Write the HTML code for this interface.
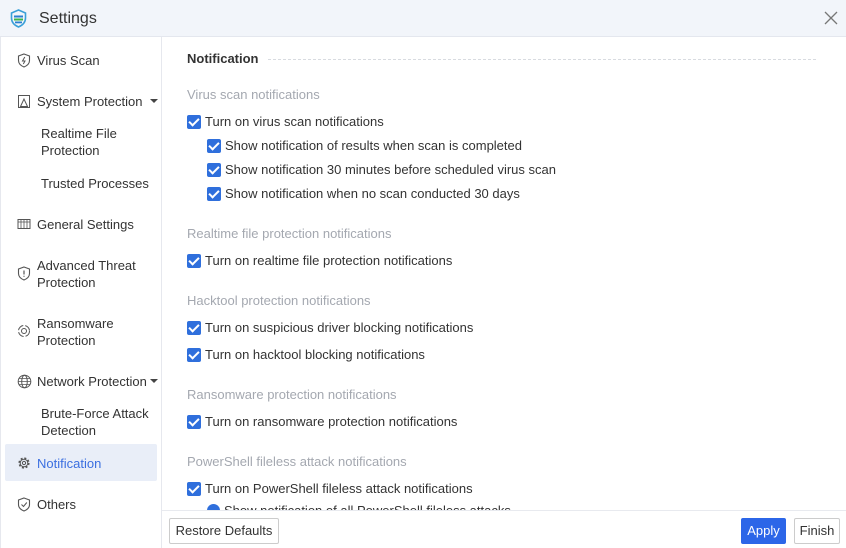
<!DOCTYPE html>
<html><head><style>
*{margin:0;padding:0;box-sizing:border-box}
body{width:846px;height:548px;overflow:hidden;background:#fff;font-family:"Liberation Sans","Noto Sans CJK SC",sans-serif;color:#333;font-size:13px;position:relative}
.title{position:absolute;left:0;top:0;width:846px;height:37px;background:#f2f5fa;border-bottom:1px solid #e4e7ee}
.title span{position:absolute;left:39px;top:10px;font-size:16px;color:#333}
.close{position:absolute;right:8px;top:11px}
.side{position:absolute;left:0;top:37px;width:162px;height:511px;border-right:1px solid #e6e8ee;border-left:1px solid #e6e8ee}
.it{position:absolute;left:37px;font-size:13px;color:#333;line-height:17px}
.sub{position:absolute;left:41px;font-size:13px;color:#333;line-height:17px}
.ic{position:absolute;left:17px}
.sel{position:absolute;left:5px;top:444px;width:152px;height:37px;background:#e9eef8;border-radius:2px}
.arr{position:absolute;width:0;height:0;border-left:4px solid transparent;border-right:4px solid transparent;border-top:4px solid #444}
.c{position:absolute;font-size:13px;color:#333;line-height:16px;white-space:nowrap}
.c i{display:inline-block;width:14px;height:14px;background:#2f6fdc;border-radius:2px;vertical-align:-3px;margin-right:4px;position:relative}
.c i:after{content:"";position:absolute;left:4px;top:1px;width:4px;height:8px;border:solid #fff;border-width:0 2px 2px 0;transform:rotate(45deg)}
.h{position:absolute;left:187px;color:#a4a8b0;font-size:13px}
.bottom{position:absolute;left:162px;top:510px;width:684px;height:38px;background:#fff;border-top:1px solid #e8eaef}
.btn{position:absolute;height:26px;border:1px solid #ccc;border-radius:2px;font-size:13px;line-height:24px;text-align:center;color:#333;background:#fff}
</style></head><body>
<div class="title">
<svg style="position:absolute;left:10px;top:9px" width="17" height="19" viewBox="0 0 17 19"><path d="M8.5 1 L15.5 4 V9 C15.5 13.5 12 16.5 8.5 18 C5 16.5 1.5 13.5 1.5 9 V4Z" fill="none" stroke="#3aa0d8" stroke-width="1.6"/><rect x="4" y="6.5" width="9" height="2" fill="#2a7fd0"/><rect x="4" y="9.5" width="9" height="2" fill="#3cb44a"/><rect x="5" y="12.5" width="7" height="1.8" fill="#2a7fd0"/></svg>
<span>Settings</span>
<svg class="close" width="14" height="14" viewBox="0 0 14 14"><path d="M1 1L13 13M13 1L1 13" stroke="#777" stroke-width="1.3"/></svg>
</div>
<div class="side"></div>
<div class="sel"></div>
<svg class="ic" style="top:53px" width="14" height="15" viewBox="0 0 14 15"><path d="M7 1L12.5 3V7.5C12.5 10.5 10 12.8 7 14C4 12.8 1.5 10.5 1.5 7.5V3Z" fill="none" stroke="#555" stroke-width="1.1"/><path d="M7.8 4L5.5 8H8L6.3 11" fill="none" stroke="#555" stroke-width="1"/></svg>
<div class="it" style="top:52px">Virus Scan</div>
<svg class="ic" style="top:94px" width="14" height="15" viewBox="0 0 14 15"><rect x="1.5" y="1.5" width="11" height="12" fill="none" stroke="#555"/><path d="M7 5L3.5 12.5H10.5Z" fill="none" stroke="#555"/></svg>
<div class="it" style="top:93px">System Protection</div>
<div class="arr" style="left:150px;top:99px"></div>
<div class="sub" style="top:125px">Realtime File<br>Protection</div>
<div class="sub" style="top:175px">Trusted Processes</div>
<svg class="ic" style="top:218px" width="14" height="12" viewBox="0 0 14 12"><rect x="1" y="1.5" width="12" height="9" fill="none" stroke="#555"/><path d="M1 4H13M4 1.5V10.5M7 1.5V10.5M10 1.5V10.5" stroke="#555" stroke-width=".8"/></svg>
<div class="it" style="top:216px">General Settings</div>
<svg class="ic" style="top:266px" width="14" height="15" viewBox="0 0 14 15"><path d="M7 1L12.5 3V7.5C12.5 10.5 10 12.8 7 14C4 12.8 1.5 10.5 1.5 7.5V3Z" fill="none" stroke="#555" stroke-width="1.1"/><path d="M7 4.5V8.5M7 9.8V10.8" stroke="#555" stroke-width="1.2"/></svg>
<div class="it" style="top:257px">Advanced Threat<br>Protection</div>
<svg class="ic" style="top:324px" width="14" height="14" viewBox="0 0 14 14"><circle cx="7" cy="7" r="5.5" fill="none" stroke="#555" stroke-dasharray="7 2"/><circle cx="7" cy="7" r="2.5" fill="none" stroke="#555"/></svg>
<div class="it" style="top:315px">Ransomware<br>Protection</div>
<svg class="ic" style="top:374px" width="15" height="15" viewBox="0 0 15 15"><circle cx="7.5" cy="7.5" r="6.3" fill="none" stroke="#555"/><ellipse cx="7.5" cy="7.5" rx="2.8" ry="6.3" fill="none" stroke="#555"/><path d="M1.2 7.5H13.8M2 4.5H13M2 10.5H13" stroke="#555" stroke-width=".8"/></svg>
<div class="it" style="top:373px">Network Protection</div>
<div class="arr" style="left:150px;top:379px"></div>
<div class="sub" style="top:405px">Brute-Force Attack<br>Detection</div>
<svg class="ic" style="top:456px" width="14" height="14" viewBox="0 0 14 14"><circle cx="7" cy="7" r="4.8" fill="none" stroke="#555" stroke-width="1.6" stroke-dasharray="2 1.8"/><circle cx="7" cy="7" r="3.8" fill="none" stroke="#555"/><circle cx="7" cy="7" r="1.6" fill="none" stroke="#555"/></svg>
<div class="it" style="top:455px;color:#3b6fe0">Notification</div>
<svg class="ic" style="top:497px" width="14" height="15" viewBox="0 0 14 15"><path d="M7 1L12.5 3V7.5C12.5 10.5 10 12.8 7 14C4 12.8 1.5 10.5 1.5 7.5V3Z" fill="none" stroke="#555" stroke-width="1.1"/><path d="M4.5 7.5L6.5 9.5L9.8 5.5" fill="none" stroke="#555"/></svg>
<div class="it" style="top:496px">Others</div>

<div style="position:absolute;left:187px;top:51px;font-weight:bold;font-size:13px;color:#333">Notification</div>
<div style="position:absolute;left:268px;top:59px;width:548px;border-top:1px dashed #d8dbe0"></div>
<div class="h" style="top:87px">Virus scan notifications</div>
<div class="c" style="left:187px;top:114px"><i></i>Turn on virus scan notifications</div>
<div class="c" style="left:207px;top:138px"><i></i>Show notification of results when scan is completed</div>
<div class="c" style="left:207px;top:162px"><i></i>Show notification 30 minutes before scheduled virus scan</div>
<div class="c" style="left:207px;top:186px"><i></i>Show notification when no scan conducted 30 days</div>
<div class="h" style="top:226px">Realtime file protection notifications</div>
<div class="c" style="left:187px;top:253px"><i></i>Turn on realtime file protection notifications</div>
<div class="h" style="top:293px">Hacktool protection notifications</div>
<div class="c" style="left:187px;top:320px"><i></i>Turn on suspicious driver blocking notifications</div>
<div class="c" style="left:187px;top:347px"><i></i>Turn on hacktool blocking notifications</div>
<div class="h" style="top:387px">Ransomware protection notifications</div>
<div class="c" style="left:187px;top:414px"><i></i>Turn on ransomware protection notifications</div>
<div class="h" style="top:454px">PowerShell fileless attack notifications</div>
<div class="c" style="left:187px;top:481px"><i></i>Turn on PowerShell fileless attack notifications</div>
<div class="c" style="left:207px;top:503px"><span style="display:inline-block;width:13px;height:13px;border-radius:50%;background:#2f6fdc;vertical-align:-2px;margin-right:4px"></span>Show notification of all PowerShell fileless attacks</div>
<div class="bottom">
<div class="btn" style="left:7px;top:7px;width:110px">Restore Defaults</div>
<div class="btn" style="left:579px;top:7px;width:45px;background:#2c66e8;border-color:#2c66e8;color:#fff">Apply</div>
<div class="btn" style="left:632px;top:7px;width:46px">Finish</div>
</div>
</body></html>
